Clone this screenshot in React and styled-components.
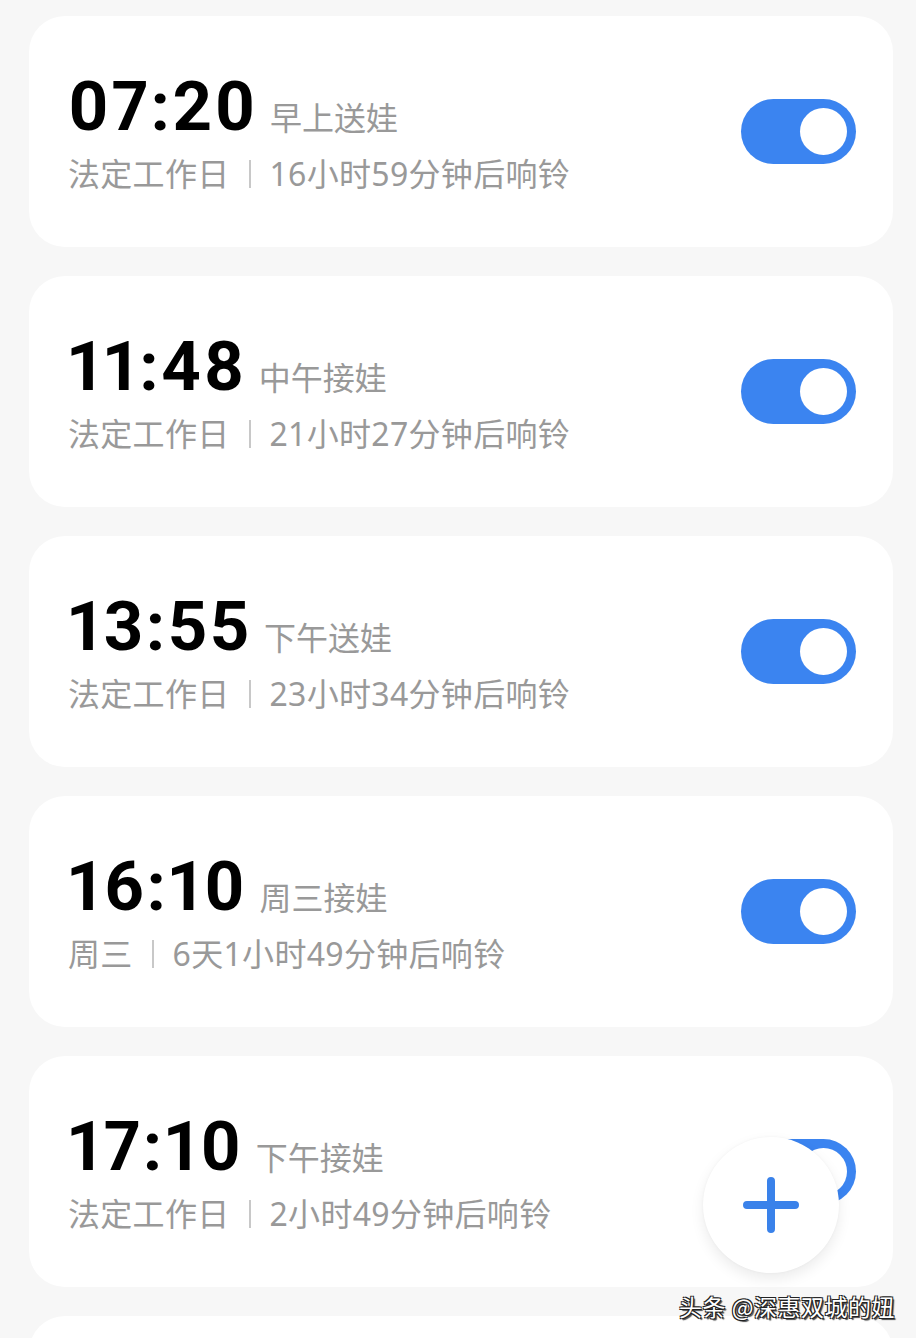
import React from "react";
import styled, { createGlobalStyle } from "styled-components";

const alarms = [
  { time: "07:20", label: "早上送娃", days: "法定工作日", left: "16小时59分钟后响铃" },
  { time: "11:48", label: "中午接娃", days: "法定工作日", left: "21小时27分钟后响铃" },
  { time: "13:55", label: "下午送娃", days: "法定工作日", left: "23小时34分钟后响铃" },
  { time: "16:10", label: "周三接娃", days: "周三", left: "6天1小时49分钟后响铃" },
  { time: "17:10", label: "下午接娃", days: "法定工作日", left: "2小时49分钟后响铃" },
  { time: "", label: "", days: "", left: "" },
];

export default function App() {
  return (
    <Screen>
      <GlobalStyle />
      <List>
        {alarms.map((a, i) => (
          <Card key={i}>
            {a.time && (
              <>
                <Info>
                  <TimeRow>
                    <Time>{a.time}</Time>
                    <Label>{a.label}</Label>
                  </TimeRow>
                  <Sub>
                    {a.days}
                    <Sep />
                    {a.left}
                  </Sub>
                </Info>
                <Toggle>
                  <Knob />
                </Toggle>
              </>
            )}
          </Card>
        ))}
      </List>
      <Fab>
        <svg width="56" height="56" viewBox="0 0 56 56">
          <path d="M28 4v48M4 28h48" stroke="#3a82ea" strokeWidth="8" strokeLinecap="round" />
        </svg>
      </Fab>
      <Watermark>头条 @深惠双城的妞</Watermark>
    </Screen>
  );
}

const GlobalStyle = createGlobalStyle`
  html, body {
    margin: 0;
    padding: 0;
    background: #f7f7f7;
  }
`;

const Screen = styled.div`
  position: relative;
  width: 916px;
  height: 1338px;
  overflow: hidden;
  background: #f7f7f7;
  font-family: Roboto, "Noto Sans CJK SC", sans-serif;
`;

const List = styled.div`
  display: flex;
  flex-direction: column;
  gap: 29px;
  padding: 16px 23px 0 29px;
`;

const Card = styled.div`
  display: flex;
  align-items: center;
  justify-content: space-between;
  height: 231px;
  flex-shrink: 0;
  padding: 0 37px 0 39px;
  background: #fff;
  border-radius: 36px;
`;

const Info = styled.div`
  display: flex;
  flex-direction: column;
  margin-top: 2px;
`;

const TimeRow = styled.div`
  display: flex;
  align-items: baseline;
  gap: 12px;
`;

const Time = styled.span`
  font-family: Roboto, sans-serif;
  font-weight: 700;
  font-size: 69px;
  line-height: 70px;
  letter-spacing: 2.5px;
  font-variant-numeric: proportional-nums;
  color: #000;
`;

const Label = styled.span`
  font-family: "Noto Sans CJK SC", sans-serif;
  font-size: 32px;
  color: #999;
`;

const Sub = styled.div`
  display: flex;
  align-items: center;
  margin-top: 12px;
  font-family: "Noto Sans", "Noto Sans CJK SC", sans-serif;
  font-size: 32px;
  line-height: 40px;
  letter-spacing: 0.3px;
  color: #999;
`;

const Sep = styled.span`
  width: 2px;
  height: 28px;
  margin: 0 19px 0 19px;
  background: #c8c8c8;
`;

const Toggle = styled.div`
  display: flex;
  align-items: center;
  justify-content: flex-end;
  width: 115px;
  height: 65px;
  padding: 0 9px;
  box-sizing: border-box;
  border-radius: 33px;
  background: #3b84f0;
`;

const Knob = styled.div`
  width: 47px;
  height: 47px;
  border-radius: 50%;
  background: #fff;
`;

const Fab = styled.div`
  position: absolute;
  left: 703px;
  top: 1137px;
  width: 136px;
  height: 136px;
  border-radius: 50%;
  background: #fff;
  box-shadow: 0 6px 14px rgba(0, 0, 0, 0.08), 0 0 3px rgba(0, 0, 0, 0.04);
  display: flex;
  align-items: center;
  justify-content: center;
`;

const Watermark = styled.div`
  position: absolute;
  right: 21px;
  top: 1289px;
  font-family: "Noto Sans CJK SC", sans-serif;
  font-size: 23px;
  letter-spacing: 0.5px;
  color: #fff;
  text-shadow: 1px 1px 0 #222, -1px -1px 0 #222, 1px -1px 0 #222, -1px 1px 0 #222, 2px 2px 1px #444;
`;
